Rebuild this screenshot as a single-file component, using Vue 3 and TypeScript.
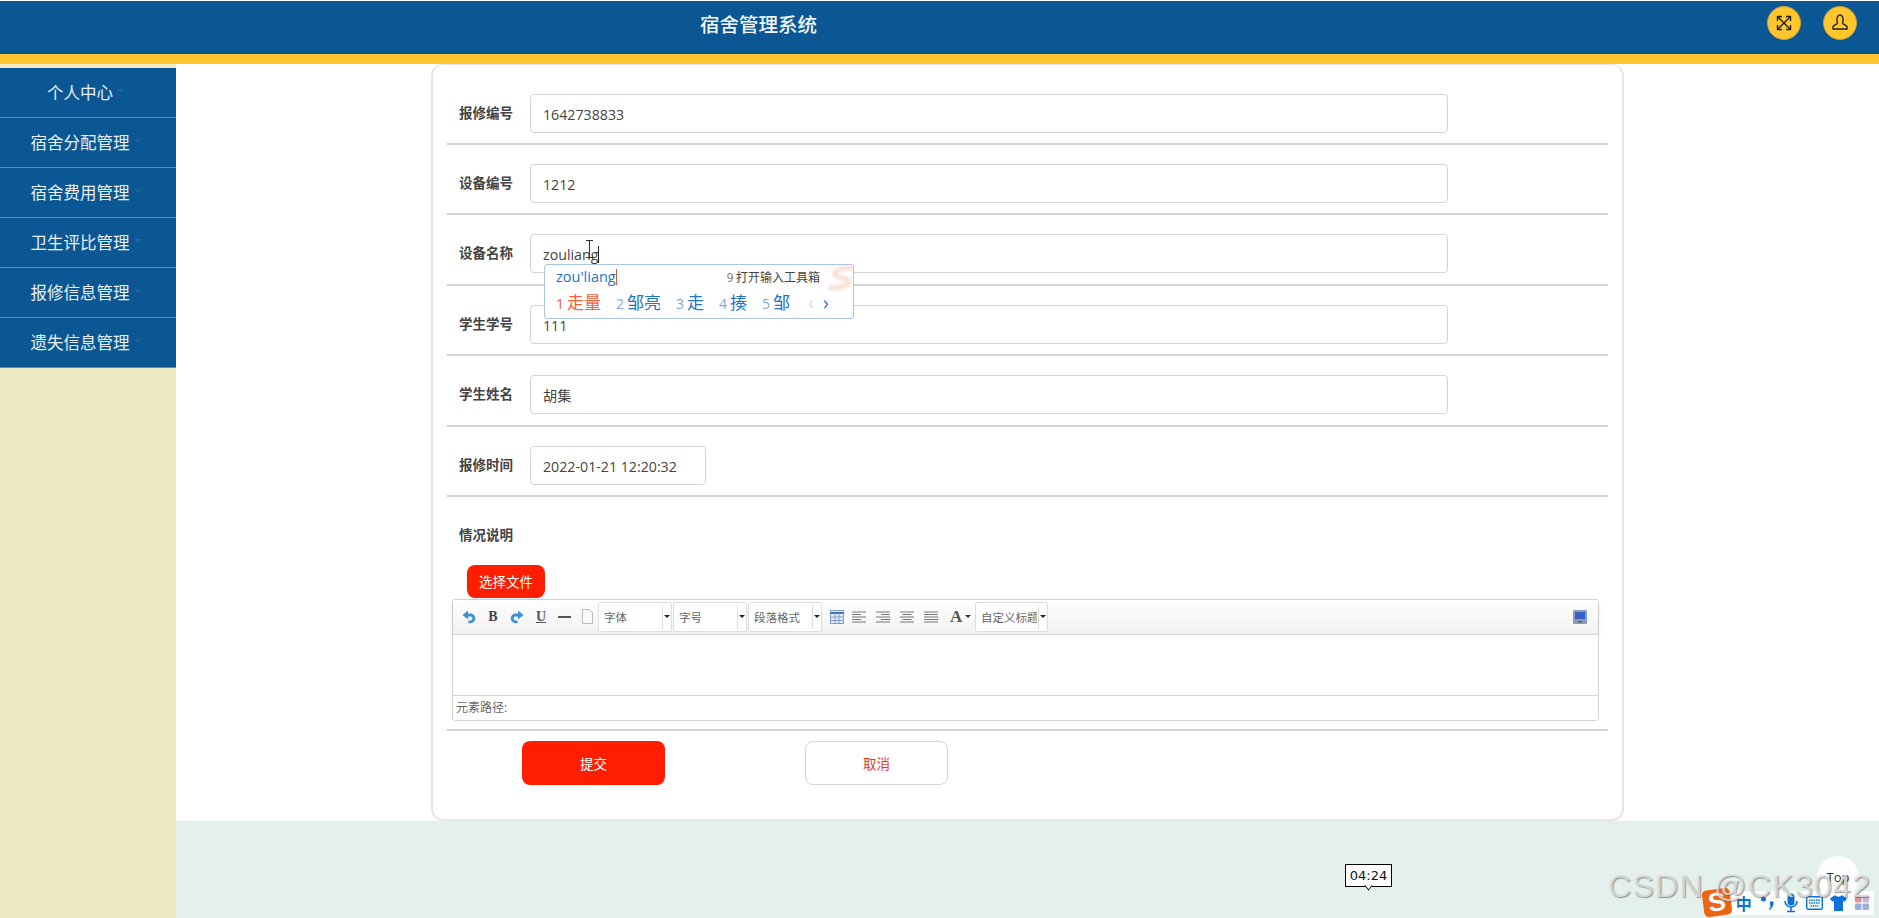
<template>
  <div class="page">
    <header class="topbar">
      <div class="topbar__title">宿舍管理系统</div>
      <div class="topbar__actions">
        <button class="round-btn" type="button">
          <svg width="18" height="18" viewBox="0 0 18 18" fill="none" stroke="#222" stroke-width="1.4">
            <path d="M3 3l12 12M15 3L3 15" />
            <path d="M2.500 7V2.500H7M11 2.500h4.500V7M15.500 11v4.500H11M7 15.500H2.500V11" />
          </svg>
        </button>
        <button class="round-btn" type="button">
          <svg width="20" height="20" viewBox="0 0 20 20" fill="none" stroke="#222" stroke-width="1.4">
            <path d="M7.500 10C6 5 7.500 2 10 2s4 3 2.500 8c-.3 1 3.500 2 4.500 3.500v2.500H3v-2.500c1-1.500 4.800-2.500 4.500-3.500z" />
          </svg>
        </button>
      </div>
    </header>

    <div class="layout">
      <aside class="sidebar">
        <div v-for="item in menu" :key="item" class="sidebar__item">
          <span>{{ item }}</span><i class="sidebar__caret"></i>
        </div>
      </aside>

      <main class="main">
        <section class="content">
          <form class="card" @submit.prevent>
            <div v-for="row in rows" :key="row.label" class="row">
              <label class="row__label">{{ row.label }}</label>
              <div class="row__input" :class="{ 'row__input--short': row.short }">
                {{ row.value }}<i v-if="row.caret" class="text-caret"></i>
              </div>
            </div>

            <div class="desc">
              <div class="row__label desc__label">情况说明</div>
              <button class="file-btn" type="button">选择文件</button>
              <div class="editor">
                <div class="editor__toolbar">
                  <svg class="tool" width="14" height="14" viewBox="0 0 14 14" fill="none">
                    <path d="M5 5h3.500a3.300 3.300 0 0 1 0 6.800H6.500" stroke="#3f8fd8" stroke-width="2.800" />
                    <path d="M6 .5v9L.5 5z" fill="#3f8fd8" />
                  </svg>
                  <span class="tool tool--b">B</span>
                  <svg class="tool" width="14" height="14" viewBox="0 0 14 14" fill="none">
                    <path d="M9 5H5.500a3.300 3.300 0 0 0 0 6.800h2" stroke="#3f8fd8" stroke-width="2.800" />
                    <path d="M8 .5v9L13.500 5z" fill="#3f8fd8" />
                  </svg>
                  <span class="tool tool--u">U</span>
                  <span class="tool tool--hr"></span>
                  <svg class="tool tool--doc" width="13" height="15" viewBox="0 0 13 15"><path d="M1.500 .5h7l3 3v11h-10z" fill="#fafafa" stroke="#bbb" /></svg>
                  <div v-for="s in selects" :key="s" class="combo"><span>{{ s }}</span><i class="combo__arrow"></i></div>
                  <svg class="tool tool--table" width="14" height="14" viewBox="0 0 14 14"><rect x=".5" y=".5" width="13" height="13" fill="#e7eefa" stroke="#7f9fd0" /><path d="M.5 3h13" stroke="#3b6fc0" stroke-width="2" /><path d="M5 3v11M9 3v11M0 7h14M0 10.500h14" stroke="#7f9fd0" /></svg>
                  <svg v-for="(a, i) in aligns" :key="i" class="tool" width="14" height="12" viewBox="0 0 14 12">
                    <path :d="a" stroke="#777" fill="none" />
                  </svg>
                  <span class="tool tool--a">A</span><i class="tool-arrow"></i>
                  <div class="combo combo--last"><span>自定义标题</span><i class="combo__arrow"></i></div>
                  <svg class="tool tool--screen" width="14" height="14" viewBox="0 0 14 14"><rect width="14" height="14" rx="1" fill="#8a9cb8" /><rect x="2" y="2" width="10" height="7" fill="#3560c8" /><rect x="5" y="11" width="4" height="1.500" fill="#566" /></svg>
                </div>
                <div class="editor__body"></div>
                <div class="editor__status">元素路径:</div>
              </div>
            </div>

            <div class="actions">
              <button class="btn btn--primary" type="button">提交</button>
              <button class="btn btn--ghost" type="button">取消</button>
            </div>
          </form>
        </section>
        <section class="mint"></section>
      </main>
    </div>

    <!-- overlays captured in the screenshot -->
    <svg class="ibeam" width="9" height="18" viewBox="0 0 9 18" fill="none" stroke="#333"><path d="M1 .5h7M4.500 .5v17M1 17.500h7" /></svg>
    <div class="ime">
      <svg class="ime__skin" width="30" height="26" viewBox="0 0 30 26" fill="none">
        <path d="M30 3C20 2 10 5 12 10c2 4 14 2 14 7 0 4-10 6-20 6" stroke="#f6b08f" stroke-width="5" />
      </svg>
      <div class="ime__top">
        <span class="ime__pinyin">zou'liang<i class="ime__cursor"></i></span>
        <span class="ime__tool"><em>9</em> 打开输入工具箱</span>
      </div>
      <div class="ime__cands">
        <span v-for="(c, i) in candidates" :key="c" class="ime__cand" :class="{ 'ime__cand--on': i === 0 }"><em>{{ i + 1 }}</em>{{ c }}</span>
        <span class="ime__pager"><b class="off">‹</b><b>›</b></span>
      </div>
    </div>
    <div class="clock">04:24</div>
    <div class="to-top">Top</div>
    <div class="tray">
      <span class="tray__logo">S</span>
      <span class="tray__cell tray__zh">中</span>
      <span class="tray__cell">
        <svg width="16" height="16" viewBox="0 0 16 16" fill="#0a72d8"><circle cx="3.500" cy="4" r="2.500" /><path d="M10 6.500h3.500c.2 3.500-1 6-3.500 8.500l-1-1c1-1 1.600-2.200 1.800-3.500H10z" /></svg>
      </span>
      <span class="tray__cell">
        <svg width="14" height="20" viewBox="0 0 14 20"><rect x="3.500" y=".5" width="7" height="12" rx="3.500" fill="#0a72d8" /><path d="M1 8a6 6 0 0 0 12 0M7 14v4M3 18.500h8" stroke="#0a72d8" stroke-width="1.600" fill="none" /></svg>
      </span>
      <span class="tray__cell">
        <svg width="17" height="14" viewBox="0 0 17 14"><rect x=".7" y=".7" width="15.600" height="12.600" rx="1.500" fill="none" stroke="#0a72d8" stroke-width="1.400" /><path d="M3 4.200h11M3 7h11M4.500 10h8" stroke="#0a72d8" stroke-width="1.500" stroke-dasharray="1.500 .8" /></svg>
      </span>
      <span class="tray__cell">
        <svg width="17" height="16" viewBox="0 0 15 14"><path d="M4.500 0L0 3l2 3 1.500-1v9h8V5L13 6l2-3-4.500-3c-1 2-5 2-6 0z" fill="#0a72d8" /></svg>
      </span>
      <span class="tray__cell">
        <svg width="14" height="14" viewBox="0 0 13 13" opacity=".8"><rect width="6" height="6" rx="1" fill="#d77" /><rect x="7" width="6" height="6" rx="1" fill="#b9a3d8" /><rect y="7" width="6" height="6" rx="1" fill="#7f9fd8" /><rect x="7" y="7" width="6" height="6" rx="1" fill="#8a9ad0" /></svg>
      </span>
    </div>
    <div class="watermark">CSDN @CK3042</div>
  </div>
</template>

<script setup lang="ts">
interface FormRow {
  label: string
  value: string
  short?: boolean
  caret?: boolean
}

const menu = ['个人中心', '宿舍分配管理', '宿舍费用管理', '卫生评比管理', '报修信息管理', '遗失信息管理']

const rows: FormRow[] = [
  { label: '报修编号', value: '1642738833' },
  { label: '设备编号', value: '1212' },
  { label: '设备名称', value: 'zouliang', caret: true },
  { label: '学生学号', value: '111' },
  { label: '学生姓名', value: '胡集' },
  { label: '报修时间', value: '2022-01-21 12:20:32', short: true }
]

const selects = ['字体', '字号', '段落格式']
const candidates = ['走量', '邹亮', '走', '揍', '邹']

const aligns = [
  'M0 1h14M0 3.500h9M0 6h14M0 8.500h9M0 11h14',
  'M0 1h14M5 3.500h9M0 6h14M5 8.500h9M0 11h14',
  'M0 1h14M2.500 3.500h9M0 6h14M2.500 8.500h9M0 11h14',
  'M0 1h14M0 3.500h14M0 6h14M0 8.500h14M0 11h14'
]
</script>

<style>
html,
body {
  margin: 0;
  overflow: hidden;
}
</style>

<style scoped>
.page {
  position: relative;
  width: 1879px;
  height: 918px;
  overflow: hidden;
  font-family: "Open Sans", "Noto Sans CJK SC", sans-serif;
  color: #333;
}

.topbar {
  box-sizing: border-box;
  height: 64px;
  display: flex;
  align-items: center;
  justify-content: space-between;
  padding: 1px 22px 10px 0;
  background: #0b5794;
  border-bottom: 10px solid #ffc62d;
  border-top: 1px solid #fff;
}

.topbar__title {
  width: 1517px;
  text-align: center;
  font-size: 19.500px;
  color: #f2f6fa;
  font-weight: 500;
}

.topbar__actions {
  display: flex;
  gap: 22px;
}

.round-btn {
  width: 34px;
  height: 34px;
  padding: 0;
  display: flex;
  align-items: center;
  justify-content: center;
  background: #ffc62d;
  border: 1px solid #c9a22f;
  border-radius: 50%;
}

.layout {
  display: flex;
  height: 854px;
}

.sidebar {
  box-sizing: border-box;
  width: 176px;
  padding-top: 4px;
  background: #eeeac4;
  flex-shrink: 0;
}

.sidebar__item {
  box-sizing: border-box;
  height: 50px;
  display: flex;
  align-items: center;
  justify-content: center;
  gap: 4px;
  padding: 0 4px 1px 0;
  background: #0b5794;
  border-bottom: 1px solid #5f8fb8;
  color: #e8eff5;
  font-size: 16.500px;
}

.sidebar__caret {
  width: 0;
  height: 0;
  margin-top: -3px;
  border-left: 4px solid transparent;
  border-right: 4px solid transparent;
  border-top: 4px solid #1f639b;
}

.main {
  flex: 1;
  display: flex;
  flex-direction: column;
}

.content {
  height: 757px;
  display: flex;
  justify-content: flex-start;
  padding-left: 255px;
  background: #fff;
}

.mint {
  flex: 1;
  background: #e4f0eb;
}

.card {
  box-sizing: border-box;
  width: 1193px;
  height: 757px;
  padding: 9px 14px 0;
  background: #fff;
  border: 2px solid #e6e6e6;
  border-top-width: 1px;
  border-radius: 12px;
}

.row {
  box-sizing: border-box;
  height: 70.400px;
  display: flex;
  align-items: flex-start;
  padding-top: 19px;
  border-bottom: 2px solid #d4d4d4;
}

.row:first-child {
  height: 71px;
  padding-top: 20px;
}

.row__label {
  width: 83px;
  padding-left: 12px;
  box-sizing: border-box;
  flex-shrink: 0;
  line-height: 39px;
  font-size: 13.500px;
  font-weight: 700;
  color: #444;
}

.row__input {
  box-sizing: border-box;
  width: 918px;
  height: 39px;
  padding-left: 12px;
  line-height: 39px;
  font-size: 14.200px;
  color: #444;
  border: 1px solid #d4d4d4;
  border-radius: 4px;
}

.row__input--short {
  width: 176px;
}

.text-caret {
  display: inline-block;
  width: 1px;
  height: 17px;
  vertical-align: -3px;
  background: #222;
}

.desc {
  box-sizing: border-box;
  height: 234px;
  padding-top: 29px;
  border-bottom: 2px solid #d4d4d4;
}

.desc__label {
  line-height: 18px;
}

.file-btn {
  display: block;
  box-sizing: border-box;
  width: 78px;
  height: 33px;
  margin: 21px 0 1px 20px;
  padding: 0;
  border: 0;
  border-radius: 8px;
  background: #ff1e00;
  color: #fff;
  font-family: inherit;
  font-size: 13.500px;
}

.editor {
  box-sizing: border-box;
  width: 1147px;
  height: 122px;
  margin-left: 5px;
  border: 1px solid #d4d4d4;
  border-radius: 3px;
  display: flex;
  flex-direction: column;
}

.editor__toolbar {
  box-sizing: border-box;
  height: 35px;
  display: flex;
  align-items: center;
  padding: 0 9px;
  background: linear-gradient(#fff, #f1f1f1);
  border-bottom: 1px solid #d4d4d4;
  box-shadow: 0 2px 4px rgba(0, 0, 0, 0.12);
  font-family: "Liberation Serif", serif;
}

.tool {
  flex-shrink: 0;
  margin-right: 10px;
  text-align: center;
}

.tool--b {
  width: 14px;
  font-size: 14px;
  font-weight: 700;
  color: #444;
}

.tool--u {
  width: 14px;
  font-size: 14px;
  font-weight: 700;
  text-decoration: underline;
  color: #555;
}

.tool--hr {
  width: 13px;
  height: 2px;
  background: #555;
}

.tool--doc {
  margin-right: 4px;
}

.tool--table {
  margin-left: 7px;
  margin-right: 8px;
}

.tool--a {
  width: 12px;
  margin-left: 2px;
  margin-right: 3px;
  font-size: 17px;
  font-weight: 700;
  color: #555;
}

.tool--screen {
  margin-left: auto;
  margin-right: 2px;
}

.tool-arrow {
  width: 0;
  height: 0;
  margin-right: 4px;
  border-left: 3px solid transparent;
  border-right: 3px solid transparent;
  border-top: 3px solid #333;
}

.combo {
  box-sizing: border-box;
  position: relative;
  width: 74px;
  height: 30px;
  margin-right: 1px;
  padding-left: 5px;
  line-height: 28px;
  font-family: "Noto Sans CJK SC", sans-serif;
  font-size: 11.500px;
  color: #666;
  background: #fff;
  border: 1px solid #ddd;
  border-radius: 2px;
  white-space: nowrap;
  overflow: hidden;
}

.combo::after {
  content: "";
  position: absolute;
  right: 8px;
  top: 2px;
  bottom: 2px;
  width: 1px;
  background: #ddd;
}

.combo--last {
  width: 73px;
  margin-right: 0;
  padding-right: 10px;
}

.combo--last span {
  display: block;
  overflow: hidden;
}

.combo__arrow {
  position: absolute;
  right: 1px;
  top: 12px;
  width: 0;
  height: 0;
  border-left: 3px solid transparent;
  border-right: 3px solid transparent;
  border-top: 3px solid #222;
}

.editor__body {
  flex: 1;
  background: #fff;
}

.editor__status {
  box-sizing: border-box;
  height: 25px;
  padding-left: 3px;
  line-height: 24px;
  font-size: 12px;
  color: #666;
  border-top: 1px solid #d4d4d4;
}

.actions {
  display: flex;
  gap: 140px;
  padding: 10px 0 0 75px;
}

.btn {
  box-sizing: border-box;
  width: 143px;
  height: 44px;
  padding: 0;
  font-family: inherit;
  font-size: 13.500px;
  border-radius: 8px;
}

.btn--primary {
  background: #ff1e00;
  color: #fff;
  border: 0;
}

.btn--ghost {
  background: #fff;
  color: #e53a2a;
  border: 1px solid #d4d4d4;
}

.ibeam {
  position: absolute;
  left: 585px;
  top: 240px;
}

.ime {
  box-sizing: border-box;
  position: absolute;
  left: 544px;
  top: 264px;
  width: 310px;
  height: 55px;
  background: #fff;
  border: 1px solid #a9c6e4;
  border-radius: 3px;
  font-family: "Noto Sans CJK SC", "Open Sans", sans-serif;
  color: #1f74c8;
  overflow: hidden;
}

.ime__skin {
  position: absolute;
  right: 0;
  top: 0;
  opacity: 0.4;
  filter: blur(1.500px);
}

.ime__top {
  position: relative;
  display: flex;
  justify-content: space-between;
  align-items: center;
  height: 22px;
  padding: 0 33px 0 11px;
}

.ime__pinyin {
  font-family: "Open Sans", sans-serif;
  font-size: 14.500px;
}

.ime__cursor {
  display: inline-block;
  width: 1px;
  height: 16px;
  vertical-align: -3px;
  background: #e2562f;
}

.ime__tool {
  font-size: 12px;
  color: #444;
}

.ime__tool em {
  font-style: normal;
  color: #777;
}

.ime__cands {
  position: relative;
  display: flex;
  align-items: center;
  height: 28px;
  padding-left: 11px;
  font-size: 17px;
}

.ime__cand {
  margin-right: 15px;
}

.ime__cand em {
  margin-right: 3px;
  font-family: "Open Sans", sans-serif;
  font-size: 14px;
  font-style: normal;
  color: #7fa9d9;
}

.ime__cand--on,
.ime__cand--on em {
  color: #f2603a;
}

.ime__pager {
  display: flex;
  gap: 8px;
  margin-left: 3px;
  font-size: 21px;
  line-height: 1;
}

.ime__pager b {
  font-weight: 400;
}

.ime__pager .off {
  color: #cfe0f2;
}

.clock {
  box-sizing: border-box;
  position: absolute;
  left: 1345px;
  top: 864px;
  width: 47px;
  height: 23px;
  text-align: center;
  line-height: 21px;
  font-family: "DejaVu Sans", sans-serif;
  font-size: 13px;
  color: #111;
  background: #fff;
  border: 1px solid #000;
}

.clock::after {
  content: "";
  position: absolute;
  left: 19px;
  bottom: -6px;
  width: 6px;
  height: 6px;
  background: #fff;
  border-right: 1px solid #000;
  border-bottom: 1px solid #000;
  transform: scale(0.8, 1) rotate(45deg) translate(-2px, -2px);
}

.to-top {
  position: absolute;
  left: 1817px;
  top: 856px;
  width: 42px;
  height: 42px;
  text-align: center;
  line-height: 42px;
  font-size: 13px;
  color: #333;
  background: #fff;
  border-radius: 50%;
}

.watermark {
  position: absolute;
  left: 1608px;
  top: 868px;
  font-family: "Liberation Sans", sans-serif;
  font-size: 32px;
  letter-spacing: 1.300px;
  white-space: nowrap;
  color: rgba(225, 225, 225, 0.8);
  text-shadow: 1px 1px 1px rgba(90, 90, 90, 0.6);
}

.tray {
  box-sizing: border-box;
  position: absolute;
  left: 1720px;
  top: 891px;
  width: 154px;
  height: 24px;
  display: flex;
  align-items: center;
  padding-left: 12px;
  background: rgba(255, 255, 255, 0.88);
}

.tray__logo {
  position: absolute;
  left: -17px;
  top: -2px;
  width: 28px;
  height: 27px;
  text-align: center;
  font-family: "Liberation Sans", sans-serif;
  font-size: 26px;
  line-height: 27px;
  font-weight: 700;
  color: #fff;
  background: #ee6415;
  border-radius: 5px;
  transform: rotate(-8deg);
}

.tray__cell {
  width: 24px;
  display: flex;
  justify-content: center;
  align-items: center;
}

.tray__zh {
  font-size: 16px;
  font-weight: 700;
  color: #0a72d8;
}
</style>
